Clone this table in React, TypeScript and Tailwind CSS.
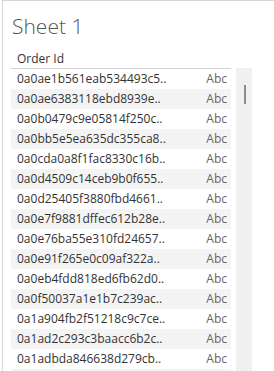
import React from "react";

const rows = [
  "0a0ae1b561eab534493c5..",
  "0a0ae6383118ebd8939e..",
  "0a0b0479c9e05814f250c..",
  "0a0bb5e5ea635dc355ca8..",
  "0a0cda0a8f1fac8330c16b..",
  "0a0d4509c14ceb9b0f655..",
  "0a0d25405f3880fbd4661..",
  "0a0e7f9881dffec612b28e..",
  "0a0e76ba55e310fd24657..",
  "0a0e91f265e0c09af322a..",
  "0a0eb4fdd818ed6fb62d0..",
  "0a0f50037a1e1b7c239ac..",
  "0a1a904fb2f51218c9c7ce..",
  "0a1ad2c293c3baacc6b2c..",
  "0a1adbda846638d279cb..",
  "",
];

export default function App() {
  return (
    <div
      className="w-[274px] h-[371px] overflow-hidden bg-white"
      style={{ fontFamily: '"Open Sans", "Noto Sans", sans-serif' }}
    >
      <div className="ml-[2px] h-full border-l border-t border-[#d6d6d6] flex flex-col">
        <div className="pt-[11px] pl-[9px] h-[48px] shrink-0 text-[21px] leading-[28px] font-light text-[#555555]">
          Sheet 1
        </div>
        <div className="flex flex-1 min-h-0">
          <div className="ml-[8px] w-[220px] flex flex-col">
            <div className="h-[20px] shrink-0 pl-[6px] border-b border-[#d4d4d4] text-[12px] leading-[19px] text-[#333333]">
              Order Id
            </div>
            {rows.map((r, i) => (
              <div
                key={i}
                className={`h-[20px] shrink-0 flex items-center justify-between pl-[6px] pr-[4px] text-[12px] leading-[20px] ${
                  i % 2 === 1 ? "bg-[#f4f4f4]" : "bg-white"
                }`}
              >
                {r ? (
                  <>
                    <span className="text-[#333333] whitespace-nowrap">{r}</span>
                    <span className="text-[#666666]">Abc</span>
                  </>
                ) : null}
              </div>
            ))}
          </div>
          <div className="ml-[5px] mt-[19px] w-[16px] bg-[#f0f0f0] flex justify-center">
            <div className="mt-[17px] w-[2px] h-[19px] bg-[#8c8c8c] ml-[2px]" />
          </div>
        </div>
      </div>
    </div>
  );
}
